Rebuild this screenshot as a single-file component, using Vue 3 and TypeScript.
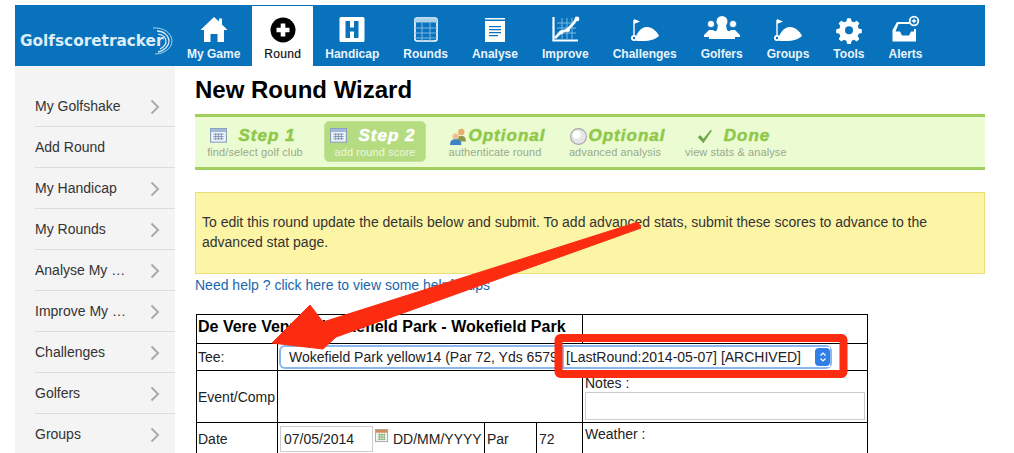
<script setup lang="ts">
interface NavItem {
  label: string;
  icon: string;
  active?: boolean;
}

const flagGreen =
  '<path d="M7 5v17" stroke="#fff" stroke-width="1.4"/><path d="M7 4l6 2.5-6 2.5z" fill="#fff"/><path d="M7 25c3-6 6-13 13-13 6 0 11 6 12 9-3 3-9 5-16 5-4 0-7 0-9-1z" fill="#fff"/><circle cx="7" cy="23" r="3" fill="#fff"/><circle cx="7" cy="23" r="1.2" fill="#0872bd"/>';

const navItems: NavItem[] = [
  {
    label: 'My Game',
    icon: '<path d="M18 2l5 4.6V3.5h3v6L31.5 15H28v12h-6.5v-8h-7v8H8V15H4.5z" fill="#fff"/>',
  },
  {
    label: 'Round',
    active: true,
    icon: '<circle cx="18" cy="15" r="12.5" fill="#000"/><path d="M15.7 8.5h4.6v4.2h4.2v4.6h-4.2v4.2h-4.6v-4.2h-4.2v-4.6h4.2z" fill="#fff"/>',
  },
  {
    label: 'Handicap',
    icon: '<path fill-rule="evenodd" d="M7 2h22a1.500 1.500 0 0 1 1.500 1.500v22a1.500 1.500 0 0 1-1.500 1.500H7a1.500 1.500 0 0 1-1.500-1.500v-22A1.500 1.500 0 0 1 7 2zm4.500 4v17h4.500v-6.500h4V23h4.500V6H20v6.500h-4V6z" fill="#fff"/>',
  },
  {
    label: 'Rounds',
    icon: '<rect x="7" y="3" width="22" height="23" rx="2" fill="none" stroke="#fff" stroke-width="1.600"/><rect x="7" y="3.500" width="22" height="4" fill="#a9cfe9"/><path d="M7 13h22M7 18h22M7 23h22M14 8v18M22 8v18" stroke="#7fb8e0" stroke-width="1"/>',
  },
  {
    label: 'Analyse',
    icon: '<path fill-rule="evenodd" d="M8 3h20v1.500H8zM8 6h20v21H8zm4 5v1.300h12V11zm0 3v1.300h12V14zm0 3v1.300h12V17zm0 3v1.300h9V20z" fill="#fff"/>',
  },
  {
    label: 'Improve',
    icon: '<path d="M10 8h19M10 13h19M10 18h19M15 3v21M20 3v21M25 3v21" stroke="#7fb8e0" stroke-width="1"/><path d="M6.500 2v23.500H31" fill="none" stroke="#fff" stroke-width="2.200"/><path d="M8 23l6-6 6-2 6-6 4-6" fill="none" stroke="#fff" stroke-width="2.600"/><circle cx="14" cy="17.500" r="2" fill="#fff"/><circle cx="21" cy="15" r="2" fill="#fff"/><circle cx="30" cy="4" r="2.400" fill="#fff"/>',
  },
  { label: 'Challenges', icon: flagGreen },
  {
    label: 'Golfers',
    icon: '<circle cx="18" cy="6.500" r="5.500" fill="#fff"/><path d="M14 10h8l1 5 8 6v3H5v-3l8-6z" fill="#fff"/><circle cx="7" cy="9" r="3.600" fill="#fff" stroke="#0872bd" stroke-width=".8"/><circle cx="29" cy="9" r="3.600" fill="#fff" stroke="#0872bd" stroke-width=".8"/><path d="M0 20l5-5h4l3 2-6 5H0zM36 20l-5-5h-4l-3 2 6 5h6z" fill="#fff"/>',
  },
  { label: 'Groups', icon: flagGreen },
  {
    label: 'Tools',
    icon: '<path fill-rule="evenodd" transform="translate(2 1.500) scale(.89)" d="M16 2h4l1 3.600 2.500 1 3.300-1.800 2.800 2.800-1.800 3.300 1 2.500 3.600 1v4l-3.600 1-1 2.500 1.800 3.300-2.800 2.800-3.300-1.800-2.500 1-1 3.600h-4l-1-3.600-2.500-1-3.300 1.800-2.800-2.800 1.800-3.300-1-2.500-3.600-1v-4l3.600-1 1-2.500-1.800-3.300 2.800-2.800 3.300 1.800 2.500-1zm2 9a4.500 4.500 0 1 0 0 9 4.500 4.500 0 0 0 0-9z" fill="#fff"/>',
  },
  {
    label: 'Alerts',
    icon: '<path fill-rule="evenodd" d="M10 7h13.500v2H11.500l-3 7.500H13l2 4h7l2-4h3V14h2v12.500H5.500V15z" fill="#fff"/><circle cx="27" cy="6" r="4.300" fill="#0872bd" stroke="#fff" stroke-width="1.800"/><path d="M27 3.800v4.400M24.800 6h4.400" stroke="#fff" stroke-width="1.300"/>',
  },
];

const sideItems = [
  { label: 'My Golfshake', more: true },
  { label: 'Add Round', more: false },
  { label: 'My Handicap', more: true },
  { label: 'My Rounds', more: true },
  { label: 'Analyse My …', more: true },
  { label: 'Improve My …', more: true },
  { label: 'Challenges', more: true },
  { label: 'Golfers', more: true },
  { label: 'Groups', more: true },
];

const calendarIcon =
  '<rect x=".5" y=".5" width="14" height="12" fill="#eef3fa" stroke="#8aa0bd"/><rect x="1" y="1" width="13" height="2.500" fill="#9db6d6"/><path d="M3 5.500h9M3 7.500h9M3 9.500h9M5 4.500v6M7.500 4.500v6M10 4.500v6" stroke="#7d93b3" stroke-width=".8"/>';

const steps = [
  {
    title: 'Step 1',
    text: 'find/select golf club',
    icon: calendarIcon,
    active: false,
    tight: false,
  },
  {
    title: 'Step 2',
    text: 'add round score',
    icon: calendarIcon,
    active: true,
    tight: false,
  },
  {
    title: 'Optional',
    text: 'authenticate round',
    icon: '<circle cx="10" cy="3.500" r="2.800" fill="#e8b070"/><path d="M6 12c0-4 1.500-5 4-5s4 1 4 5z" fill="#8a9a4a"/><circle cx="5" cy="7.500" r="2.800" fill="#f0c090"/><path d="M0 15c0-4 2-5 5-5s5 1 5 5z" fill="#3f83c4"/>',
    active: false,
    tight: true,
  },
  {
    title: 'Optional',
    text: 'advanced analysis',
    icon: '<circle cx="7.500" cy="7.500" r="7" fill="#e6e6e6" stroke="#a8a8a8"/><circle cx="6" cy="6" r="3.500" fill="#fff"/>',
    active: false,
    tight: true,
  },
  {
    title: 'Done',
    text: 'view stats & analyse',
    icon: '<path d="M1.500 8l2.500-1.500 2.500 3 6.500-8 1 1-7.500 11z" fill="#6fa84a"/>',
    active: false,
    tight: false,
  },
];
</script>

<template>
  <div class="page">
    <header class="topbar">
      <div class="logo">
        <span class="logo-text">Golfscoretracker</span>
        <svg class="logo-arcs" viewBox="0 0 24 30" width="24" height="30">
          <path d="M2 2c10-1 19 5 19 13S12 28 4 28" fill="none" stroke="#a9d3ee" stroke-width="1" />
          <path d="M6 5c7 0 12 5 12 10s-5 10-11 11" fill="none" stroke="#d3e9f7" stroke-width="1.300" />
          <path d="M7 8c5 1 8 4 8 7s-2 6-6 8" fill="none" stroke="#e6f3fb" stroke-width="1.200" />
        </svg>
      </div>
      <nav class="nav">
        <a v-for="item in navItems" :key="item.label" class="nav-item" :class="{ on: item.active }">
          <svg viewBox="0 0 36 30" width="36" height="30" v-html="item.icon"></svg>
          <span>{{ item.label }}</span>
        </a>
      </nav>
    </header>

    <div class="body">
      <aside class="side">
        <a v-for="item in sideItems" :key="item.label" class="side-item">
          <span class="side-label">{{ item.label }}</span>
          <svg v-if="item.more" viewBox="0 0 10 16" width="10" height="16">
            <path d="M1.500 1.500L8 8l-6.500 6.500" fill="none" stroke="#aaa" stroke-width="2" />
          </svg>
        </a>
      </aside>

      <main class="main">
        <h1>New Round Wizard</h1>

        <div class="steps">
          <div v-for="step in steps" :key="step.text" class="step" :class="{ on: step.active }">
            <div class="step-title" :class="{ tight: step.tight }">
              <svg viewBox="0 0 15 15" width="17" height="17" v-html="step.icon"></svg>
              <b>{{ step.title }}</b>
            </div>
            <small>{{ step.text }}</small>
          </div>
        </div>

        <div class="notice">
          To edit this round update the details below and submit. To add advanced stats, submit these scores to advance to the advanced stat page.
        </div>

        <a class="help">Need help ? click here to view some helpful tips</a>

        <table class="form">
          <colgroup>
            <col style="width: 81px" />
            <col style="width: 207px" />
            <col style="width: 52px" />
            <col style="width: 46px" />
            <col style="width: 285px" />
          </colgroup>
          <tbody>
            <tr class="r-head">
              <th colspan="4">De Vere Venue - Wokefield Park - Wokefield Park</th>
              <td></td>
            </tr>
            <tr class="r-tee">
              <td class="lbl">Tee:</td>
              <td colspan="4">
                <div class="tee-pick">
                  <select class="sel first">
                    <option>Wokefield Park yellow14 (Par 72, Yds 6579)</option>
                  </select>
                  <div class="sel-wrap">
                    <select class="sel">
                      <option>[LastRound:2014-05-07] [ARCHIVED]</option>
                    </select>
                    <span class="spin">
                      <svg viewBox="0 0 8 12" width="8" height="12">
                        <path d="M1.500 4.500L4 2l2.500 2.500M1.500 7.500L4 10l2.500-2.500" fill="none" stroke="#fff" stroke-width="1.200" />
                      </svg>
                    </span>
                  </div>
                </div>
              </td>
            </tr>
            <tr class="r-event">
              <td class="lbl">Event/Comp</td>
              <td colspan="3"></td>
              <td class="notes">
                <div>Notes :</div>
                <textarea></textarea>
              </td>
            </tr>
            <tr class="r-date">
              <td class="lbl">Date</td>
              <td>
                <div class="date-cell">
                  <input value="07/05/2014" />
                  <svg viewBox="0 0 15 15" width="14" height="14">
                    <rect x=".5" y=".5" width="13" height="13" fill="#f3f3f3" stroke="#a5a5a5" />
                    <rect x="1" y="1" width="12" height="3" fill="#d98a5a" />
                    <path d="M3 6h8M3 8.500h8M3 11h8M5 5v7M7.500 5v7M10 5v7" stroke="#7fb06a" stroke-width=".9" />
                  </svg>
                  <span>DD/MM/YYYY</span>
                </div>
              </td>
              <td>Par</td>
              <td>72</td>
              <td class="weather">Weather :</td>
            </tr>
          </tbody>
        </table>
      </main>
    </div>

    <svg class="markup" viewBox="0 0 1014 453" width="1014" height="453">
      <polygon
        points="638,222 323,322 310,305 272,343 323,349 336,337 641,228"
        fill="#fb2c10"
        stroke="#fb2c10"
        stroke-width="1"
        stroke-linejoin="round"
      />
      <rect x="558.500" y="338" width="285" height="36" rx="2" fill="none" stroke="#fb2c10" stroke-width="8" />
    </svg>
  </div>
</template>

<style scoped>
.page {
  position: relative;
  width: 1014px;
  height: 453px;
  padding: 5px 29px 0 15px;
  box-sizing: border-box;
  overflow: hidden;
  background: #fff;
  color: #222;
  font-family: "Liberation Sans", Arial, sans-serif;
}
.topbar {
  display: flex;
  height: 61px;
  background: #0872bd;
}
.logo {
  width: 160px;
  display: flex;
  align-items: center;
  padding: 10px 0 0 5px;
  box-sizing: border-box;
  color: #dcedf8;
}
.logo-text {
  font-family: "DejaVu Sans", sans-serif;
  font-weight: 700;
  font-size: 15.300px;
  white-space: nowrap;
}
.logo-arcs {
  margin-left: -13px;
  flex: none;
}
.nav {
  display: flex;
  padding-top: 1px;
}
.nav-item {
  display: flex;
  flex-direction: column;
  align-items: center;
  padding: 9px 12px 0;
  color: #eaf4fb;
  font-size: 12px;
  font-weight: 700;
  white-space: nowrap;
}
.nav-item svg {
  margin: 0 -6px;
}
.nav-item span {
  margin-top: 2px;
}
.nav-item.on {
  background: #fff;
  color: #111;
  font-weight: 400;
  letter-spacing: 0.3px;
  -webkit-text-stroke: 0.2px #111;
}
.body {
  display: flex;
  gap: 20px;
}
.side {
  width: 160px;
  flex: none;
  height: 400px;
  padding: 20px 0 0 20px;
  box-sizing: border-box;
  background: #f4f4f4;
}
.side-item {
  display: flex;
  align-items: center;
  justify-content: space-between;
  height: 41px;
  padding: 0 15px 1px 0;
  box-sizing: border-box;
  border-bottom: 1px solid #ddd;
  color: #333;
  font-size: 14px;
}
.side-label {
  white-space: nowrap;
}
.side-item svg {
  flex: none;
  margin-top: 3px;
}
.main {
  width: 790px;
  flex: none;
}
h1 {
  margin: 9px 0 9px;
  font-size: 24px;
  line-height: 30px;
  color: #000;
}
.steps {
  display: flex;
  gap: 18px;
  height: 56px;
  padding: 4px 9px;
  box-sizing: border-box;
  background: #ebfbd2;
  border-top: 3px solid #a2cf5e;
  border-bottom: 3px solid #a2cf5e;
}
.step {
  width: 102px;
  height: 41px;
  box-sizing: border-box;
  padding-top: 4px;
  text-align: center;
  border-radius: 5px;
  border: 1px solid transparent;
}
.step.on {
  background: #b5dc80;
  border-color: #c4e39a;
}
.step-title {
  display: flex;
  align-items: center;
  justify-content: center;
  gap: 11px;
  height: 20px;
  margin-right: 4px;
}
.step-title.tight {
  gap: 2px;
  margin-right: -5px;
}
.step-title b {
  font-size: 17px;
  font-style: italic;
  font-weight: 700;
  color: #8fc84a;
  letter-spacing: 1px;
  -webkit-text-stroke: 0.5px currentColor;
}
.step small {
  display: block;
  margin-top: -1px;
  font-size: 11px;
  line-height: 14px;
  letter-spacing: 0.1px;
  color: #9aaa8c;
  white-space: nowrap;
}
.step.on b {
  color: #fff;
}
.step.on small {
  color: #eef7e0;
}
.notice {
  height: 82px;
  margin-top: 22px;
  padding: 19px 6px 0;
  box-sizing: border-box;
  background: #fdf5a6;
  border: 1px solid #ecdf78;
  font-size: 14px;
  line-height: 20px;
  color: #333;
}
.help {
  display: block;
  margin-top: 1px;
  font-size: 14px;
  line-height: 20px;
  color: #1b66ad;
}
.form {
  width: 671px;
  margin: 19px 0 0 1px;
  border-collapse: collapse;
  table-layout: fixed;
  font-size: 14px;
  color: #222;
}
.form th,
.form td {
  border: 1px solid #000;
  padding: 0 2px;
  text-align: left;
  white-space: nowrap;
}
.form th {
  font-size: 16px;
  color: #000;
  padding-bottom: 4px;
}
.form th,
.form td.lbl {
  padding-left: 1px;
}
.r-head {
  height: 29px;
}
.r-tee {
  height: 27px;
}
.r-event {
  height: 52px;
}
.r-date {
  height: 32px;
}
.tee-pick {
  display: flex;
  height: 20px;
  margin-left: 1px;
}
.sel {
  appearance: none;
  height: 20px;
  border: none;
  background: #fff;
  padding: 0 0 0 3px;
  margin: 0;
  font: 14px "Liberation Sans", Arial, sans-serif;
  color: #222;
  outline: none;
}
.sel.first {
  width: 280px;
  flex: none;
  padding-left: 8px;
  border-radius: 4px 0 0 4px;
  box-shadow: 0 0 0 2px #8ab8ee;
}
.sel-wrap {
  position: relative;
  width: 266px;
  flex: none;
  margin-left: 3px;
  border-radius: 0 4px 4px 0;
  box-shadow: 0 0 0 2px #8ab8ee;
}
.sel-wrap .sel {
  width: 100%;
  padding-left: 2px;
}
.spin {
  position: absolute;
  top: 1px;
  right: 0;
  width: 15px;
  height: 18px;
  display: flex;
  align-items: center;
  justify-content: center;
  border-radius: 4px;
  background: #2f7fe6;
}
.notes {
  vertical-align: top;
  line-height: 16px;
  padding-top: 4px !important;
}
.notes textarea {
  display: block;
  width: 280px;
  height: 28px;
  margin: 1px 0 0;
  padding: 0;
  box-sizing: border-box;
  border: 1px solid #ccc;
  background: #fff;
  resize: none;
}
.date-cell {
  display: flex;
  align-items: center;
}
.date-cell input {
  width: 93px;
  height: 26px;
  margin: 0;
  padding: 0 3px;
  box-sizing: border-box;
  border: 1px solid #ccc;
  font: 14px "Liberation Sans", Arial, sans-serif;
  color: #222;
}
.date-cell svg {
  flex: none;
  margin: -6px 4px 0 2px;
}
.weather {
  vertical-align: top;
  padding-top: 3px !important;
}
.markup {
  position: absolute;
  top: 0;
  left: 0;
  pointer-events: none;
}
</style>
